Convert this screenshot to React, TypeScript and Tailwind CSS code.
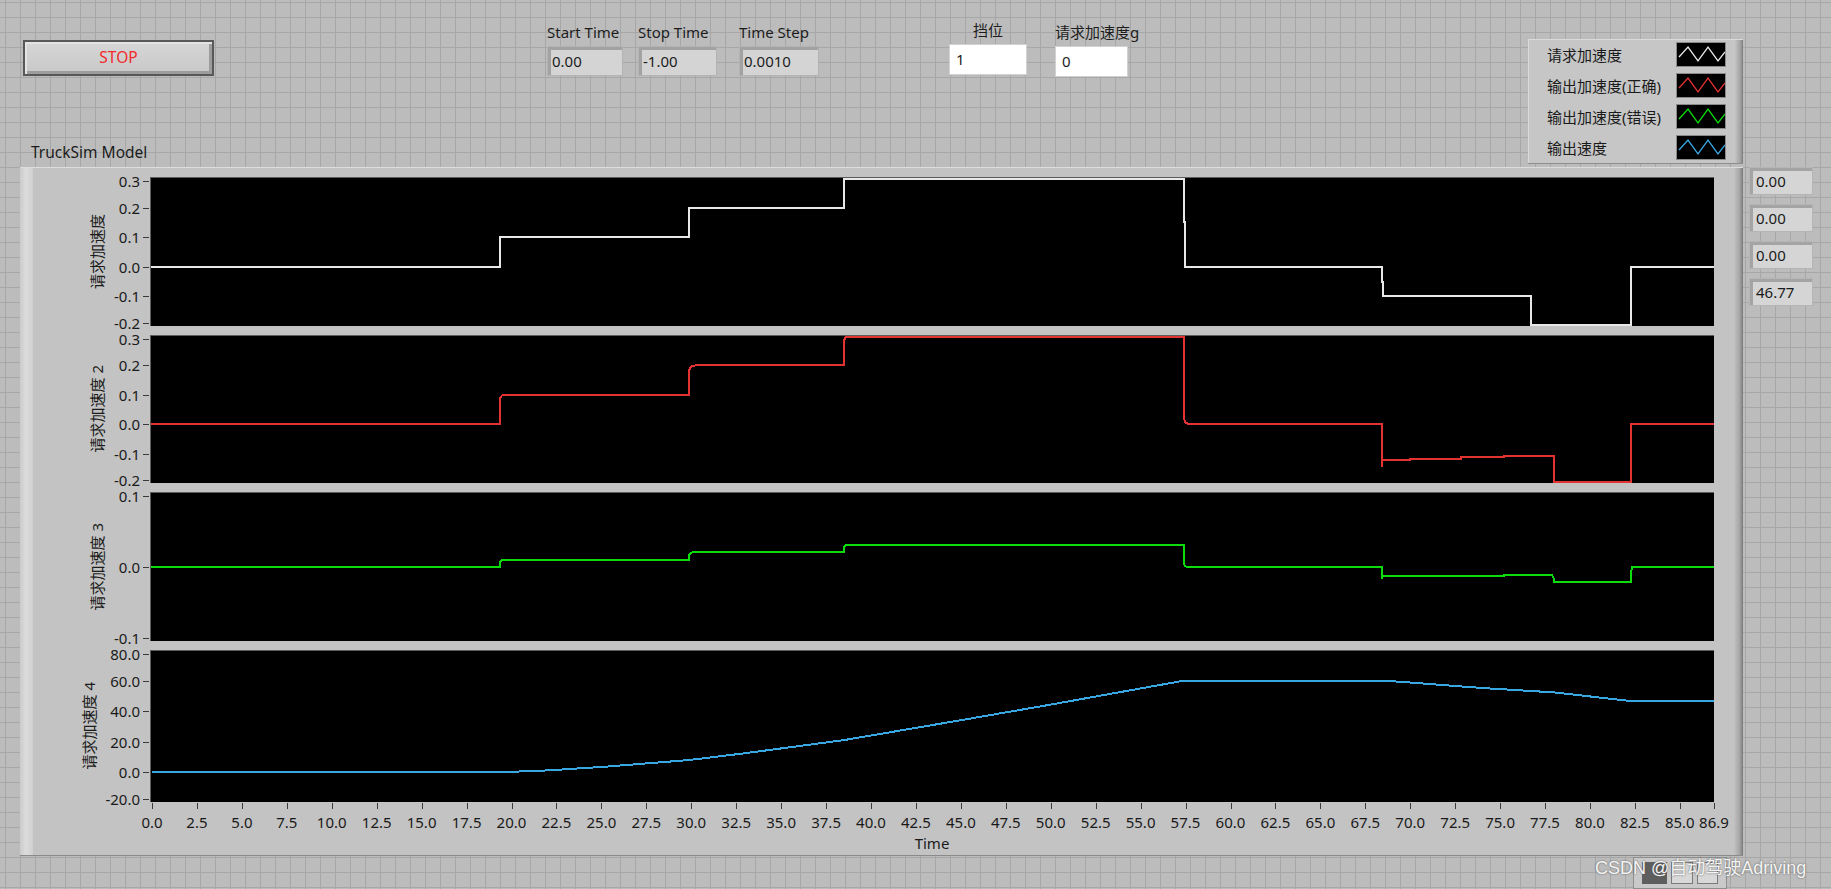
import React from 'react';

const FONT = "font-['Noto_Sans','Noto_Sans_CJK_SC',sans-serif]";

const T_END = 86.9;
const PW = 1563;
const K = (PW - 1) / T_END;
const X = (t: number) => Math.round((1 + t * K) * 10) / 10;

function yMap(vmin: number, vmax: number, h: number) {
  return (v: number) => {
    const y = ((vmax - v) / (vmax - vmin)) * h;
    return Math.round(Math.min(Math.max(y, 1), h - 1.5) * 10) / 10;
  };
}

// vertical step with a small rounded shoulder, LabVIEW style
function soft(y: (v: number) => number, t: number, to: number, lead: number) {
  const x = X(t);
  return `H${x} V${y(to - lead)} L${x + 2} ${y(to - lead * 0.2)} L${x + 6} ${y(to)}`;
}

function requestPath(h: number) {
  const y = yMap(-0.2, 0.3, h);
  return [
    `M0 ${y(0)}`,
    `H${X(19.35)} V${y(0.1)}`,
    `H${X(29.9)} V${y(0.2)}`,
    `H${X(38.5)} V${y(0.3)}`,
    `H${X(57.4)} V${y(0.15)} H${X(57.4) + 1} V${y(0)}`,
    `H${X(68.4)} V${y(-0.05)} H${X(68.4) + 1} V${y(-0.1)}`,
    `H${X(76.7)} V${y(-0.2)}`,
    `H${X(82.3)} V${y(0)}`,
    `H${PW}`,
  ].join(' ');
}

function correctPath(h: number) {
  const y = yMap(-0.2, 0.3, h);
  return [
    `M0 ${y(0)}`,
    soft(y, 19.35, 0.1, 0.014),
    soft(y, 29.9, 0.2, 0.014),
    soft(y, 38.5, 0.3, 0.014),
    soft(y, 57.4, 0, -0.02),
    `H${X(68.4)} V${y(-0.145)} M${X(68.4) + 1} ${y(-0.12)}`,
    `H${X(70)} V${y(-0.117)} H${X(72.8)} V${y(-0.113)} H${X(75.2)} V${y(-0.108)}`,
    `H${X(78)} V${y(-0.2)}`,
    `H${X(82.3)} V${y(0)}`,
    `H${PW}`,
  ].join(' ');
}

function wrongPath(h: number) {
  const y = yMap(-0.1, 0.1, h);
  return [
    `M0 ${y(0)}`,
    soft(y, 19.35, 0.01, 0.003),
    soft(y, 29.9, 0.02, 0.003),
    soft(y, 38.5, 0.03, 0.003),
    soft(y, 57.4, 0, -0.004),
    `H${X(68.4)} V${y(-0.016)} L${X(68.4) + 1} ${y(-0.012)}`,
    `H${X(75.2)} V${y(-0.011)}`,
    `H${X(77.9)} L${X(77.9) + 2} ${y(-0.017)} V${y(-0.02)}`,
    `H${X(82.3)} V${y(-0.005)} L${X(82.3) + 1} ${y(0)}`,
    `H${PW}`,
  ].join(' ');
}

function speedPath(h: number) {
  const y = yMap(-20, 80, h);
  const pts: [number, number][] = [
    [0, 0], [20, 0], [22, 0.9], [25, 3.2], [29.9, 7.8], [33, 12.3], [38.5, 21],
    [45, 34.2], [50, 44.5], [57.4, 60.3], [68.4, 60.3], [69, 60], [74, 55.5],
    [78, 52.6], [82.3, 46.8], [T_END, 46.77],
  ];
  return 'M' + pts.map(([t, v]) => `${X(t)} ${y(v)}`).join(' L');
}

type Plot = {
  title: string;
  vmin: number;
  vmax: number;
  h: number;
  row: string;
  labelW: number;
  ticks: [number, string][];
  color: string;
  path: string;
};

const accTicks: [number, string][] = [
  [0.3, '0.3'], [0.2, '0.2'], [0.1, '0.1'], [0, '0.0'], [-0.1, '-0.1'], [-0.2, '-0.2'],
];

const plots: Plot[] = [
  { title: '请求加速度', vmin: -0.2, vmax: 0.3, h: 148, row: 'h-[149px]', labelW: 45, ticks: accTicks, color: '#e8e8e8', path: requestPath(148) },
  { title: '请求加速度 2', vmin: -0.2, vmax: 0.3, h: 147, row: 'h-[148px] mt-[9px]', labelW: 45, ticks: accTicks, color: '#e23232', path: correctPath(147) },
  { title: '请求加速度 3', vmin: -0.1, vmax: 0.1, h: 148, row: 'h-[149px] mt-[9px]', labelW: 45, ticks: [[0.1, '0.1'], [0, '0.0'], [-0.1, '-0.1']], color: '#0cdc0c', path: wrongPath(148) },
  { title: '请求加速度 4', vmin: -20, vmax: 80, h: 151, row: 'h-[152px] mt-[9px]', labelW: 53, ticks: [[80, '80.0'], [60, '60.0'], [40, '40.0'], [20, '20.0'], [0, '0.0'], [-20, '-20.0']], color: '#38a8e2', path: speedPath(151) },
];

const xTicks: [number, string][] = [
  ...Array.from({ length: 35 }, (_, i) => [i * 2.5, (i * 2.5).toFixed(1)] as [number, string]),
  [T_END, '86.9'],
];

const legend = [
  { label: '请求加速度', color: '#e8e8e8' },
  { label: '输出加速度(正确)', color: '#e23232' },
  { label: '输出加速度(错误)', color: '#0cdc0c' },
  { label: '输出速度', color: '#38a8e2' },
];

function Control({ label, value, w, white, center }: { label: string; value: string; w: string; white?: boolean; center?: boolean }) {
  return (
    <div className={`flex flex-col ${w} ${center ? 'items-center' : 'items-start'}`}>
      <span className="h-[18px] whitespace-nowrap text-[15px] leading-[18px] text-[#1c1c1c]">{label}</span>
      {white ? (
        <div className="mt-[5px] flex h-[31px] w-full items-center border border-[#d2d2d2] bg-white pl-[6px] text-[15px] text-[#1c1c1c]">{value}</div>
      ) : (
        <div className="mt-[5px] flex h-[30px] w-full items-center border border-[#b3b3b3] bg-[#d4d4d4] pl-[4px] text-[15px] text-[#1c1c1c] shadow-[inset_3px_3px_0_#a2a2a2]">{value}</div>
      )}
    </div>
  );
}

function Indicator({ value }: { value: string }) {
  return (
    <div className="flex h-[28px] w-[64px] items-center border border-[#b5b5b5] bg-[#d5d5d5] pl-[6px] text-[15px] leading-none text-[#1a1a1a] shadow-[inset_3px_3px_0_#a4a4a4]">
      {value}
    </div>
  );
}

function PlotRow({ p }: { p: Plot }) {
  return (
    <div className={`flex ${p.row}`}>
      <div className="flex h-full w-[117px] justify-end">
        <div className="flex h-full items-center">
          <span className="rotate-180 whitespace-nowrap text-[15px] leading-[16px] text-[#1c1c1c] [text-orientation:sideways] [writing-mode:vertical-rl]">
            {p.title}
          </span>
        </div>
        <div className="relative h-full" style={{ width: p.labelW }}>
          {p.ticks.map(([v, l]) => {
            const pos = 1 + ((p.vmax - v) / (p.vmax - p.vmin)) * p.h;
            const at = Math.min(Math.max(pos, 4), p.h - 2);
            return (
              <React.Fragment key={l}>
                <span className="absolute right-[10px] whitespace-nowrap text-[15px] leading-[14px] text-[#1a1a1a]" style={{ top: at - 7 }}>
                  {l}
                </span>
                <span className="absolute right-[1px] h-px w-[6px] bg-[#3a3a3a]" style={{ top: at }} />
              </React.Fragment>
            );
          })}
        </div>
      </div>
      <div className="h-full w-[1564px] border-l border-t border-[#5c5c5c] bg-black">
        <svg width={PW} height={p.h} className="block">
          <path d={p.path} fill="none" stroke={p.color} strokeWidth={2} shapeRendering="crispEdges" />
        </svg>
      </div>
    </div>
  );
}

export default function App() {
  return (
    <div
      className={`relative h-[889px] w-[1831px] overflow-hidden bg-[#bcbcbc] bg-[linear-gradient(to_right,#a7a7a7_1px,transparent_1px),linear-gradient(to_bottom,#a7a7a7_1px,transparent_1px)] bg-[size:15px_15px] bg-[position:5px_2px] ${FONT}`}
    >
      {/* top controls */}
      <div className="flex h-[167px] items-start">
        <div className="flex h-full w-[547px] flex-col pl-[23px]">
          <button className="mt-[40px] flex h-[36px] w-[191px] items-center justify-center border-2 border-[#585858] bg-[linear-gradient(to_bottom,#d6d6d6,#c8c8c8)] text-[15.5px] text-[#f22a2a] shadow-[inset_2px_2px_0_#e4e4e4,inset_-3px_-3px_0_#9c9c9c]">
            STOP
          </button>
          <span className="mb-[6px] ml-[8px] mt-auto text-[15.5px] leading-[18px] text-[#1c1c1c]">TruckSim Model</span>
        </div>
        <div className="mt-[23px] flex items-start">
          <Control label="Start Time" value="0.00" w="w-[76px]" />
          <div className="ml-[15px]">
            <Control label="Stop Time" value="-1.00" w="w-[79px]" />
          </div>
          <div className="ml-[22px]">
            <Control label="Time Step" value="0.0010" w="w-[80px]" />
          </div>
          <div className="-mt-[2px] ml-[130px]">
            <Control label="挡位" value="1" w="w-[78px]" white center />
          </div>
          <div className="ml-[28px]">
            <Control label="请求加速度g" value="0" w="w-[73px]" white />
          </div>
        </div>

        {/* legend */}
        <div className="ml-auto mr-[88px] mt-[39px] flex h-[124px] w-[215px] border-l border-t border-[#dadada] bg-[#c6c6c6] shadow-[0_1px_0_#8e8e8e]">
          <div className="flex flex-1 flex-col gap-[6px] pl-[18px] pt-[2px]">
            {legend.map((l) => (
              <div key={l.label} className="flex h-[25px] items-center justify-between pr-[9px]">
                <span className="text-[15px] leading-[18px] text-[#1a1a1a]">{l.label}</span>
                <div className="h-[25px] w-[50px] border border-[#8a8a8a] bg-black">
                  <svg width={48} height={23} className="block">
                    <polyline points="2,14 11,4 21,18 31,4 41,18 48,9" fill="none" stroke={l.color} strokeWidth={1.3} />
                  </svg>
                </div>
              </div>
            ))}
          </div>
          <div className="w-[8px] bg-[linear-gradient(to_right,#c4c4c4,#a0a0a0_70%,#7c7c7c)]" />
        </div>
      </div>

      {/* chart frame + indicators */}
      <div className="flex items-start">
        <div className="ml-[20px] flex h-[689px] w-[1723px] border-b border-t border-b-[#8a8a8a] border-t-[#dcdcdc] bg-[#c3c3c3]">
          <div className="w-[13px] bg-[linear-gradient(to_right,#cbcbcb,#dcdcdc_45%,#cfcfcf)]" />
          <div className="flex w-[1700px] flex-col pt-[9px]">
            {plots.map((p) => (
              <PlotRow key={p.title} p={p} />
            ))}
            <div className="flex h-[53px]">
              <div className="w-[117px]" />
              <div className="relative h-full w-[1564px]">
                {xTicks.map(([t, l]) => (
                  <React.Fragment key={l}>
                    <span className="absolute top-[1px] h-[6px] w-px bg-[#3a3a3a]" style={{ left: 1 + X(t) }} />
                    <span className="absolute top-[12px] -translate-x-1/2 whitespace-nowrap text-[15px] leading-[16px] text-[#1a1a1a]" style={{ left: 1 + X(t) }}>
                      {l}
                    </span>
                  </React.Fragment>
                ))}
                <span className="absolute left-1/2 top-[32px] -translate-x-1/2 text-[15px] leading-[18px] text-[#1a1a1a]">Time</span>
              </div>
            </div>
          </div>
          <div className="ml-auto w-[10px] bg-[linear-gradient(to_right,#c6c6c6,#a6a6a6_65%,#7a7a7a)]" />
        </div>

        <div className="ml-[6px] flex flex-col gap-[9px]">
          <Indicator value="0.00" />
          <Indicator value="0.00" />
          <Indicator value="0.00" />
          <Indicator value="46.77" />
        </div>
      </div>

      {/* graph palette, mostly hidden by the watermark */}
      <div className="ml-[1633px] mt-[1px] flex h-[32px] w-[94px] items-center gap-[4px] border border-[#8e8e8e] bg-[#c9c9c9] px-[8px]">
        <div className="h-[22px] w-[26px] bg-[#5e5e5e]" />
        <div className="h-[22px] w-[22px] border border-[#7a7a7a] bg-[#d8d8d8]" />
        <div className="h-[22px] w-[22px] border border-[#7a7a7a] bg-[#d8d8d8]" />
      </div>

      <span className="absolute left-[1595px] top-[857px] whitespace-nowrap font-['Liberation_Sans','Noto_Sans_CJK_SC',sans-serif] text-[18px] leading-[22px] text-[#f4f4f4] [text-shadow:0_0_2px_#555]">
        CSDN @自动驾驶Adriving
      </span>
    </div>
  );
}
